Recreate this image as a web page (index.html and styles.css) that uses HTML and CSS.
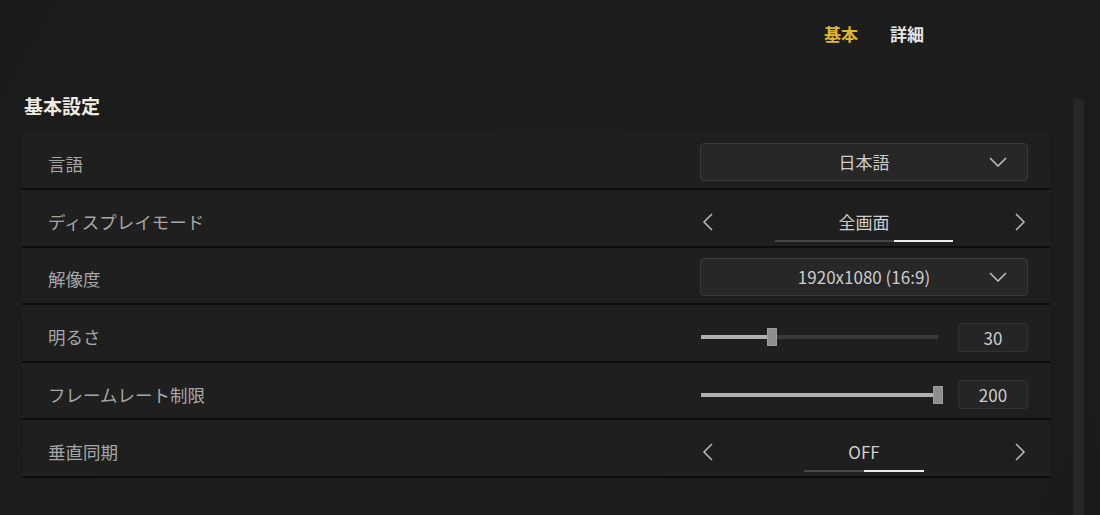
FILE: index.html
```html
<!DOCTYPE html>
<html lang="ja">
<head>
<meta charset="utf-8">
<title>設定</title>
<link rel="stylesheet" href="styles.css">
</head>
<body>
<div class="screen">
  <main class="main">
    <nav class="tabs">
      <span class="tab tab-active">基本</span>
      <span class="tab">詳細</span>
    </nav>
    <h2 class="section-title">基本設定</h2>
    <div class="rows">
      <div class="row">
        <span class="label">言語</span>
        <div class="control">
          <div class="select">
            <span class="select-value">日本語</span>
            <svg class="chev-down" width="18" height="10" viewBox="0 0 18 10"><path d="M1 1 L9 9 L17 1" fill="none" stroke="#bdbdbd" stroke-width="1.6"/></svg>
          </div>
        </div>
      </div>
      <div class="row">
        <span class="label">ディスプレイモード</span>
        <div class="control carousel">
          <svg class="arrow" width="16" height="20" viewBox="0 0 16 20"><path d="M12 2 L4 10 L12 18" fill="none" stroke="#bdbdbd" stroke-width="1.5"/></svg>
          <div class="carousel-center">
            <span class="value">全画面</span>
            <div class="dots"><span class="seg"></span><span class="seg"></span><span class="seg on"></span></div>
          </div>
          <svg class="arrow" width="16" height="20" viewBox="0 0 16 20"><path d="M4 2 L12 10 L4 18" fill="none" stroke="#bdbdbd" stroke-width="1.5"/></svg>
        </div>
      </div>
      <div class="row">
        <span class="label">解像度</span>
        <div class="control">
          <div class="select">
            <span class="select-value">1920x1080 (16:9)</span>
            <svg class="chev-down" width="18" height="10" viewBox="0 0 18 10"><path d="M1 1 L9 9 L17 1" fill="none" stroke="#bdbdbd" stroke-width="1.6"/></svg>
          </div>
        </div>
      </div>
      <div class="row">
        <span class="label">明るさ</span>
        <div class="control slider-wrap">
          <div class="slider">
            <span class="fill" style="width:66px"></span>
            <span class="thumb"></span>
            <span class="rest"></span>
          </div>
          <div class="num">30</div>
        </div>
      </div>
      <div class="row">
        <span class="label">フレームレート制限</span>
        <div class="control slider-wrap">
          <div class="slider">
            <span class="fill" style="width:232px"></span>
            <span class="thumb"></span>
          </div>
          <div class="num">200</div>
        </div>
      </div>
      <div class="row">
        <span class="label">垂直同期</span>
        <div class="control carousel">
          <svg class="arrow" width="16" height="20" viewBox="0 0 16 20"><path d="M12 2 L4 10 L12 18" fill="none" stroke="#bdbdbd" stroke-width="1.5"/></svg>
          <div class="carousel-center">
            <span class="value">OFF</span>
            <div class="dots dots-wide"><span class="seg"></span><span class="seg on"></span></div>
          </div>
          <svg class="arrow" width="16" height="20" viewBox="0 0 16 20"><path d="M4 2 L12 10 L4 18" fill="none" stroke="#bdbdbd" stroke-width="1.5"/></svg>
        </div>
      </div>
    </div>
  </main>
  <div class="scrollbar"></div>
</div>
</body>
</html>
```
FILE: styles.css
```css
* { box-sizing: border-box; }
html, body {
  margin: 0;
  padding: 0;
  width: 1100px;
  height: 515px;
  overflow: hidden;
  background: #1c1c1c;
  font-family: "Noto Sans CJK JP", "Noto Sans", sans-serif;
}
.screen {
  display: flex;
  width: 1100px;
  height: 515px;
  background: linear-gradient(120deg, #1b1b1b 0%, #1d1d1d 45%, #1b1b1b 100%);
}
.main {
  width: 1050px;
  padding-left: 22px;
}
.tabs {
  display: flex;
  gap: 32px;
  padding-top: 22px;
  padding-left: 802px;
  height: 46px;
}
.tab {
  font-size: 17px;
  line-height: 24px;
  font-weight: 700;
  color: #e6e6e6;
}
.tab-active { color: #e2b62c; }
.section-title {
  margin: 47px 0 0 2px;
  font-size: 19px;
  line-height: 26px;
  font-weight: 700;
  color: #efebe0;
}
.rows {
  margin-top: 13.5px;
}
.row {
  display: flex;
  align-items: center;
  justify-content: space-between;
  height: 57.6px;
  padding: 8px 22px 0 26px;
  background: #1f1f1f;
  border-bottom: 2px solid #0c0c0c;
}
.label {
  font-size: 17.5px;
  line-height: 24px;
  color: #a6a6a6;
}
.control {
  width: 328px;
}
.select {
  display: grid;
  grid-template-columns: 1fr auto 1fr;
  align-items: center;
  height: 38px;
  margin-top: -5px;
  background: #272727;
  border: 1px solid #3a3a3a;
  border-radius: 4px;
}
.select-value {
  grid-column: 2;
  font-size: 17px;
  line-height: 24px;
  color: #cccccc;
}
.chev-down {
  grid-column: 3;
  justify-self: end;
  margin-right: 20px;
}
.carousel {
  display: grid;
  grid-template-columns: 16px 1fr 16px;
  align-items: center;
}
.carousel-center {
  display: flex;
  flex-direction: column;
  align-items: center;
  padding-top: 8px;
}
.value {
  font-size: 17px;
  line-height: 24px;
  color: #cfcfcf;
}
.dots {
  display: flex;
  margin-top: 6px;
}
.seg {
  width: 59.3px;
  height: 2px;
  background: #474747;
}
.dots-wide .seg { width: 60px; }
.seg.on {
  background: #ececec;
}
.slider-wrap {
  display: flex;
  align-items: center;
  gap: 15px;
  margin-top: 0;
}
.slider {
  display: flex;
  align-items: center;
  width: 242px;
  margin-left: 1px;
}
.fill {
  height: 4px;
  background: #b0b0b0;
}
.thumb {
  width: 10px;
  height: 18px;
  background: #8e8e8e;
  border: 1px solid #9c9c9c;
}
.rest {
  flex: 1;
  height: 4px;
  margin-right: 5px;
  background: #3a3a3a;
}
.num {
  width: 70px;
  height: 29px;
  background: #252525;
  border: 1px solid #323232;
  border-radius: 3px;
  text-align: center;
  font-size: 17px;
  line-height: 27px;
  color: #cccccc;
}
.scrollbar {
  width: 11px;
  margin-left: 23px;
  margin-top: 99px;
  height: 416px;
  background: #272727;
  border-left: 1px solid #242424;
  border-right: 1px solid #242424;
}
```
